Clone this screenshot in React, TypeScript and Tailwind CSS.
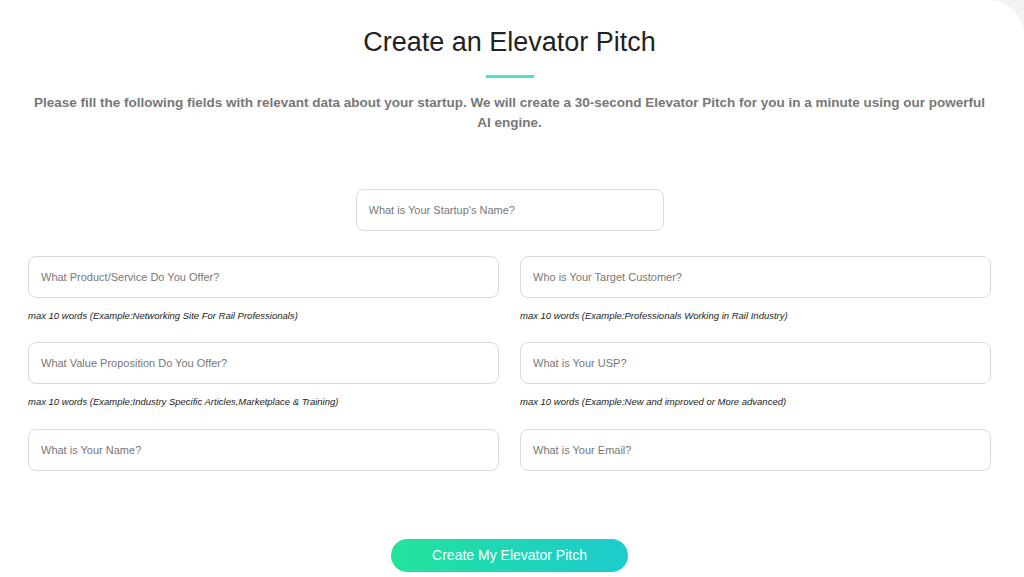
const Field = ({ placeholder, hint }: { placeholder: string; hint?: string }) => (
  <div className="flex flex-col">
    <input
      className="h-[42px] w-full rounded-lg border border-[#d8dbe0] bg-white px-3 text-[11px] text-[#333] placeholder:text-[#777] outline-none"
      placeholder={placeholder}
    />
    {hint && <p className="mt-[12px] text-[9.5px] leading-[11px] italic text-[#222]">{hint}</p>}
  </div>
)

export default function App() {
  return (
    <div className="min-h-[577px] bg-[#f3f3f3] font-['Liberation_Sans',Arial,sans-serif]">
      <div className="min-h-[577px] bg-white rounded-tr-[36px] pl-[28px] pr-[33px] pt-[25px]">
        <h1 className="text-center text-[27px] leading-[34px] text-[#222]">Create an Elevator Pitch</h1>
        <div className="mx-auto mt-[16px] h-[3px] w-[48px] bg-[#4fe0cf]" />
        <p className="mx-auto mt-[15px] max-w-[960px] text-center text-[13.5px] font-bold leading-[20px] text-[#777]">
          Please fill the following fields with relevant data about your startup. We will create a 30-second Elevator Pitch for you in a minute using our powerful AI engine.
        </p>
        <div className="mx-auto mt-[56px] w-[308px]">
          <Field placeholder="What is Your Startup's Name?" />
        </div>
        <div className="mt-[25px] grid grid-cols-2 gap-x-[21px]">
          <Field
            placeholder="What Product/Service Do You Offer?"
            hint="max 10 words (Example:Networking Site For Rail Professionals)"
          />
          <Field
            placeholder="Who is Your Target Customer?"
            hint="max 10 words (Example:Professionals Working in Rail Industry)"
          />
        </div>
        <div className="mt-[21px] grid grid-cols-2 gap-x-[21px]">
          <Field
            placeholder="What Value Proposition Do You Offer?"
            hint="max 10 words (Example:Industry Specific Articles,Marketplace & Training)"
          />
          <Field
            placeholder="What is Your USP?"
            hint="max 10 words (Example:New and improved or More advanced)"
          />
        </div>
        <div className="mt-[22px] grid grid-cols-2 gap-x-[21px]">
          <Field placeholder="What is Your Name?" />
          <Field placeholder="What is Your Email?" />
        </div>
        <div className="mt-[68px] flex justify-center">
          <button className="h-[33px] w-[237px] rounded-full bg-gradient-to-r from-[#23e39a] to-[#1fcace] text-[14px] text-white">
            Create My Elevator Pitch
          </button>
        </div>
      </div>
    </div>
  )
}
